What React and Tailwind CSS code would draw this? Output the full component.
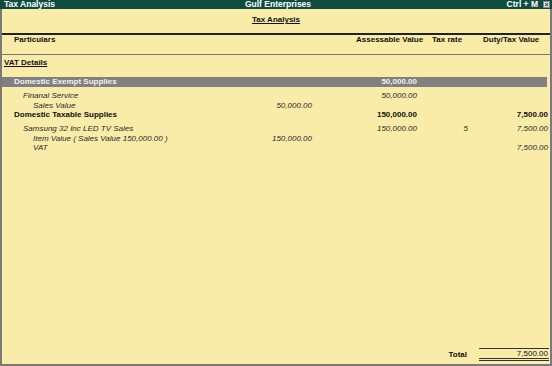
import React from 'react';

const rows = [
  { name: 'Finanal Service', pad: 'pl-[21px]', assess: '50,000.00', italic: true },
  { name: 'Sales Value', pad: 'pl-[31px]', sub: '50,000.00', italic: true },
  { name: 'Domestic Taxable Supplies', pad: 'pl-[12px]', assess: '150,000.00', duty: '7,500.00', bold: true },
];

const rows2 = [
  { name: 'Samsung 32 Inc LED TV Sales', pad: 'pl-[21px]', assess: '150,000.00', rate: '5', duty: '7,500.00', italic: true },
  { name: 'Item Value ( Sales Value 150,000.00 )', pad: 'pl-[31px]', sub: '150,000.00', italic: true },
  { name: 'VAT', pad: 'pl-[31px]', duty: '7,500.00', italic: true },
];

function Row({ row }) {
  return (
    <div
      className={
        'flex h-[9.5px] leading-[9.5px] whitespace-nowrap ' +
        (row.bold ? 'font-bold text-[#111]' : '') +
        (row.italic ? 'italic text-[#2a2a2a]' : '')
      }
    >
      <div className={'w-[250px] ' + row.pad}>{row.name}</div>
      <div className="w-[62px] pr-[2px] text-right">{row.sub}</div>
      <div className="w-[106px] pr-[3px] text-right">{row.assess}</div>
      <div className="w-[50px] pr-[2px] text-right">{row.rate}</div>
      <div className="w-[80px] pr-[2px] text-right">{row.duty}</div>
    </div>
  );
}

export default function App() {
  return (
    <div className="w-[552px] h-[366px] flex flex-col bg-[#f8eca8] text-[8px] text-[#111] font-['Liberation_Sans',Arial,sans-serif] overflow-hidden">
      <div className="h-[9px] flex items-center bg-[#0e4c3e] text-white font-bold text-[8.5px] leading-[9px]">
        <div className="flex-1 pl-[4px]">Tax Analysis</div>
        <div className="flex-1 text-center">Gulf Enterprises</div>
        <div className="flex-1 flex justify-end items-center">
          <span className="mr-[5px]">Ctrl + M</span>
          <span className="w-[7px] h-[7px] mr-[2px] flex items-center justify-center bg-[#e4e4e4] border border-[#888] text-[#333] text-[7px] leading-none">×</span>
        </div>
      </div>

      <div className="flex-1 flex flex-col border-l-2 border-r-2 border-b-2 border-[#7a7a7a]">
        <div className="h-[24px] pt-[6px] text-center font-bold leading-[10px]">
          <span className="underline underline-offset-[1px]">Tax Analysis</span>
        </div>

        <div className="h-[22px] border-t-2 border-b border-t-[#222] border-b-[#777] flex font-bold leading-[10px] whitespace-nowrap">
          <div className="w-[354px] pl-[12px]">Particulars</div>
          <div className="w-[76px]">Assessable Value</div>
          <div className="w-[51px]">Tax rate</div>
          <div>Duty/Tax Value</div>
        </div>

        <div className="mt-[3px] pl-[2px] h-[10px] leading-[10px] font-bold">
          <span className="underline underline-offset-[1px]">VAT Details</span>
        </div>

        <div className="mt-[9px] mr-[3px] h-[10px] leading-[10px] flex bg-[#808080] text-[#f2f2f2] font-bold whitespace-nowrap">
          <div className="w-[250px] pl-[12px]">Domestic Exempt Supplies</div>
          <div className="w-[62px]"></div>
          <div className="w-[106px] pr-[3px] text-right">50,000.00</div>
        </div>

        <div className="mt-[4px]">
          {rows.map((r) => (
            <Row key={r.name} row={r} />
          ))}
        </div>
        <div className="mt-[4.5px]">
          {rows2.map((r) => (
            <Row key={r.name} row={r} />
          ))}
        </div>

        <div className="flex-1" />

        <div className="flex justify-end items-center mb-[3px] mr-[1px]">
          <div className="font-bold mr-[12px] leading-[9px]">Total</div>
          <div className="w-[70px] border-t border-b-[3px] border-double border-[#333] h-[13px] pr-[1px] text-right leading-[9px]">
            7,500.00
          </div>
        </div>
      </div>
    </div>
  );
}
